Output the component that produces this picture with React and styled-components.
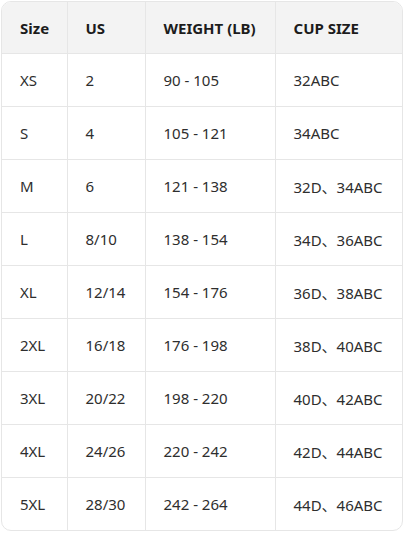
import styled, { createGlobalStyle } from "styled-components";

const GlobalStyle = createGlobalStyle`
  html, body {
    margin: 0;
    padding: 0;
    background: #ffffff;
  }
  body {
    font-family: "Noto Sans", "Noto Sans CJK SC", sans-serif;
  }
`;

const Wrap = styled.div`
  padding: 1px 2px 2px 1px;
`;

const Card = styled.div`
  border: 1px solid #e6e6e6;
  border-radius: 10px;
  overflow: hidden;
`;

const Table = styled.table`
  width: 100%;
  border-collapse: collapse;
  table-layout: fixed;
`;

const Head = styled.th`
  background: #f3f3f3;
  color: #1c1c1c;
  font-weight: 700;
  font-size: 15px;
  text-align: left;
  height: 51px;
  padding: 0 0 0 18px;
  border-right: 1px solid #e6e6e6;
  border-bottom: 1px solid #e6e6e6;
  &:last-child {
    border-right: none;
  }
`;

const Cell = styled.td`
  color: #2e2e2e;
  font-size: 15px;
  height: 52px;
  padding: 0 0 0 18px;
  border-right: 1px solid #e6e6e6;
  border-bottom: 1px solid #e6e6e6;
  white-space: nowrap;
  &:last-child {
    border-right: none;
  }
`;

const Row = styled.tr`
  &:last-child td {
    border-bottom: none;
  }
`;

const rows = [
  ["XS", "2", "90 - 105", "32ABC"],
  ["S", "4", "105 - 121", "34ABC"],
  ["M", "6", "121 - 138", "32D、34ABC"],
  ["L", "8/10", "138 - 154", "34D、36ABC"],
  ["XL", "12/14", "154 - 176", "36D、38ABC"],
  ["2XL", "16/18", "176 - 198", "38D、40ABC"],
  ["3XL", "20/22", "198 - 220", "40D、42ABC"],
  ["4XL", "24/26", "220 - 242", "42D、44ABC"],
  ["5XL", "28/30", "242 - 264", "44D、46ABC"],
];

export default function App() {
  return (
    <Wrap>
      <GlobalStyle />
      <Card>
        <Table>
          <colgroup>
            <col style={{ width: 65 }} />
            <col style={{ width: 78 }} />
            <col style={{ width: 130 }} />
            <col />
          </colgroup>
          <thead>
            <tr>
              <Head>Size</Head>
              <Head>US</Head>
              <Head>WEIGHT (LB)</Head>
              <Head>CUP SIZE</Head>
            </tr>
          </thead>
          <tbody>
            {rows.map((r) => (
              <Row key={r[0]}>
                {r.map((c, i) => (
                  <Cell key={i}>{c}</Cell>
                ))}
              </Row>
            ))}
          </tbody>
        </Table>
      </Card>
    </Wrap>
  );
}
